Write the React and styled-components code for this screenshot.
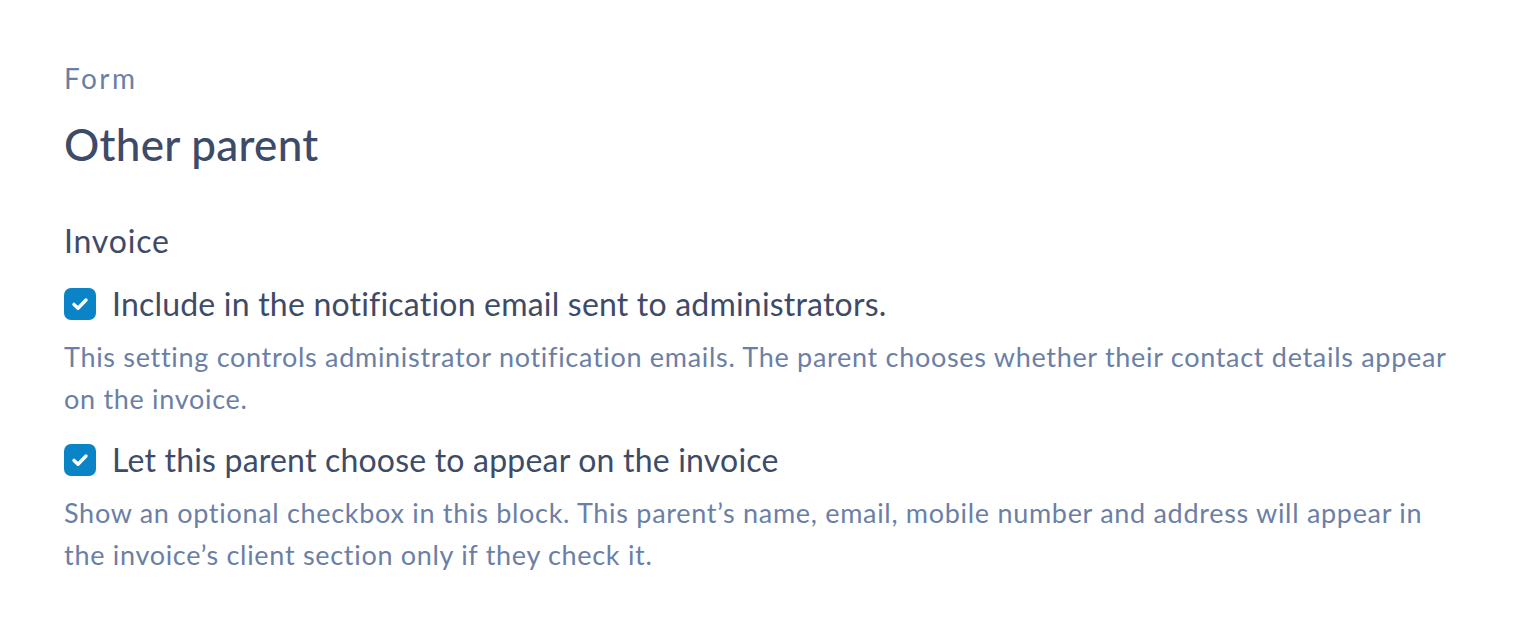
import React from "react";
import styled, { createGlobalStyle } from "styled-components";

const GlobalStyle = createGlobalStyle`
  body {
    margin: 0;
    background: #ffffff;
    font-family: Lato, "Noto Sans", sans-serif;
  }
`;

const options = [
  {
    id: "notify-admins",
    label: "Include in the notification email sent to administrators.",
    help:
      "This setting controls administrator notification emails. The parent chooses whether their contact details appear on the invoice.",
  },
  {
    id: "parent-choice",
    label: "Let this parent choose to appear on the invoice",
    help:
      "Show an optional checkbox in this block. This parent\u2019s name, email, mobile number and address will appear in the invoice\u2019s client section only if they check it.",
  },
];

const Wrapper = styled.div`
  padding: 58px 64px 40px;
  max-width: 1400px;
`;

const Eyebrow = styled.div`
  font-size: 28px;
  line-height: 40px;
  letter-spacing: 2.4px;
  color: #6b7fa6;
`;

const Title = styled.h1`
  margin: 18px 0 0;
  font-size: 44px;
  font-weight: 500;
  line-height: 56px;
  letter-spacing: 0.3px;
  color: #3e4b68;
`;

const Section = styled.section`
  margin-top: 47px;
  display: flex;
  flex-direction: column;
  gap: 18px;
`;

const SectionTitle = styled.h2`
  margin: 0 0 1px;
  font-size: 32px;
  font-weight: 400;
  line-height: 44px;
  letter-spacing: 0.8px;
  color: #3e4b68;
`;

const Option = styled.div`
  display: flex;
  flex-direction: column;
  gap: 10px;
`;

const Row = styled.label`
  display: flex;
  align-items: center;
  gap: 16px;
  cursor: pointer;
`;

const Box = styled.span`
  flex: none;
  width: 32px;
  height: 32px;
  border-radius: 7px;
  background: ${({ checked }) => (checked ? "#0a84c6" : "#ffffff")};
  border: ${({ checked }) => (checked ? "none" : "2px solid #b7c2d6")};
  display: flex;
  align-items: center;
  justify-content: center;
`;

const Label = styled.span`
  font-size: 32px;
  line-height: 44px;
  letter-spacing: 0.2px;
  color: #3e4b68;
`;

const Help = styled.p`
  margin: 0;
  font-size: 27px;
  line-height: 42px;
  letter-spacing: 0.7px;
  color: #6b7fa6;
`;

const Check = () => (
  <svg width="20" height="20" viewBox="0 0 20 20" fill="none">
    <path
      d="M4 10.4l4 3.8L16 6"
      stroke="#ffffff"
      strokeWidth="3.4"
      strokeLinecap="round"
      strokeLinejoin="round"
    />
  </svg>
);

const App = () => (
  <>
    <GlobalStyle />
    <Wrapper>
      <Eyebrow>Form</Eyebrow>
      <Title>Other parent</Title>
      <Section>
        <SectionTitle>Invoice</SectionTitle>
        {options.map((opt) => (
          <Option key={opt.id}>
            <Row>
              <Box checked>
                <Check />
              </Box>
              <Label>{opt.label}</Label>
            </Row>
            <Help>{opt.help}</Help>
          </Option>
        ))}
      </Section>
    </Wrapper>
  </>
);

export default App;
